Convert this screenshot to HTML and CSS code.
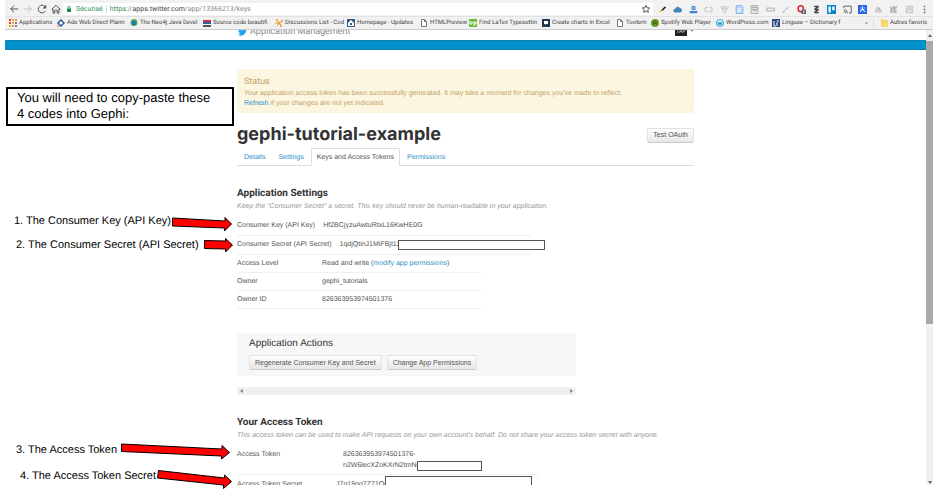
FILE: index.html
```html
<!DOCTYPE html>
<html lang="en">
<head>
<meta charset="utf-8">
<title>Application Management</title>
<link rel="stylesheet" href="styles.css">
</head>
<body>
<div class="browser">
  <div class="toolbar">
    <nav class="history" aria-label="History">
      <button class="tool" aria-label="Back"><svg viewBox="0 0 12 12"><path class="ink" d="M11 6H2M6 2 2 6l4 4"/></svg></button>
      <button class="tool" aria-label="Forward"><svg viewBox="0 0 12 12"><path class="ink faint" d="M1 6h9M6 2l4 4-4 4"/></svg></button>
      <button class="tool" aria-label="Reload"><svg viewBox="0 0 12 12"><path class="ink" d="M10 8.500A4.600 4.600 0 1 1 9.500 3"/><path d="M11 1v4.500H6.500z" fill="#555"/></svg></button>
      <button class="tool" aria-label="Home"><svg viewBox="0 0 12 12"><path class="ink" d="M1 6.500 6 1.500l5 5H9.500V11h-2V7.500h-3V11h-2V6.500z"/></svg></button>
    </nav>
    <div class="address">
      <svg class="lock" viewBox="0 0 8 8"><path d="M1.500 3.500h5V8h-5z" fill="#0b8043"/><path d="M2.500 4V2a1.500 1.500 0 0 1 3 0v2" fill="none" stroke="#0b8043"/></svg>
      <span class="secure">Sécurisé</span>
      <span class="url"><span class="secure">https</span>://<b>apps.twitter.com</b>/app/13366213/keys</span>
      <button class="tool star" aria-label="Bookmark"><svg viewBox="0 0 12 12"><path class="ink" d="m6 1.500 1.300 3 3.200.3-2.400 2.100.7 3.200L6 8.400l-2.800 1.700.7-3.200-2.400-2.100 3.200-.3z"/></svg></button>
    </div>
    <div class="extensions">
      <svg viewBox="0 0 12 12"><path d="m4 7 5-5 2 1-5 5z" fill="#222"/><path d="m1 10 3-4 2 2z" fill="#f4b400"/></svg>
      <svg viewBox="0 0 12 12"><path d="M3 10a2.500 2.500 0 0 1 0-5 3.300 3.300 0 0 1 6-1 3 3 0 0 1 0 6z" fill="#3d86b5"/></svg>
      <svg viewBox="0 0 12 12"><circle cx="6" cy="4" r="3" fill="#3b82d8"/><path d="M1 8h10v3H1z" fill="#3b82d8"/><path d="M4 4h4" stroke="#fff"/></svg>
      <svg viewBox="0 0 12 12"><path class="soft" d="M5 3H4a3 3 0 0 0 0 6h1M7 3h1a3 3 0 0 1 0 6H7"/></svg>
      <svg viewBox="0 0 12 12"><path class="soft" d="m3 1.500 3 2-3 2-2-2zM9 1.500l-3 2 3 2 2-2zM3 5.500l3 2 3-2M3 8l3 2.500L9 8"/></svg>
      <svg viewBox="0 0 12 12"><path d="M1.500.5h7l2 2v9h-9z" fill="#b9d8f8" stroke="#6aa7e8"/><path d="M3 5h5M3 7h5M3 9h5" stroke="#fff"/></svg>
      <svg viewBox="0 0 12 12"><path d="M1.500.5h9v11h-9z" fill="#e4e4e4" stroke="#999"/><path d="M3 3h6M3 6h3l1 2 2-3" fill="none" stroke="#777"/></svg>
      <svg viewBox="0 0 12 12"><path d="M.5 4h11v4H.5z" fill="#ddd" stroke="#aaa"/><path d="M3 6h6" stroke="#fff"/></svg>
      <svg viewBox="0 0 12 12"><path class="soft" d="m2 10 6-6M7 3l2 2 2-3M2 10l3-1"/></svg>
      <svg viewBox="0 0 12 12"><ellipse cx="5" cy="5" rx="3.500" ry="4" fill="none" stroke="#dc2430" stroke-width="2"/><path d="M6 6h6v6H6z" fill="#666"/><path d="M9 7v4" stroke="#fff"/></svg>
      <svg viewBox="0 0 12 12"><path d="M3 1h6v2L6 5h3v2L6 9h3v2H3V9l3-2H3V5l3-2H3z" fill="#444"/></svg>
      <svg viewBox="0 0 12 12"><path d="M0 0h12v12H0z" fill="#0784c5"/><path d="M2 2h3v8H2zM7 2h3v5H7z" fill="#fff"/></svg>
      <svg viewBox="0 0 12 12"><path class="ink" d="M1 4V1.500h10v9H8M1 6a5 5 0 0 1 5 5M1 8.500A2.500 2.500 0 0 1 3.500 11"/></svg>
      <svg viewBox="0 0 12 12"><path d="M0 0h12v12H0z" fill="#2468e8"/><path d="M6 2v3M3 9l3-4 3 4M3 4h1M8 4h1" stroke="#fff" stroke-width="1.500" fill="none"/></svg>
      <svg viewBox="0 0 12 12"><path d="m4 2 3 1 4 6-3 1H2L1 8z" fill="#bbb"/><path d="m5 3-2 5h6" stroke="#eee" fill="none"/></svg>
      <svg viewBox="0 0 12 12"><path d="M2 2h8v9H2z" fill="#ccc"/><path d="m1 3 3 3-2 4M6 1l1 4 4-3M6 7l4 3" stroke="#888" fill="none"/></svg>
      <svg viewBox="0 0 12 12"><path d="M1 1h10v10H1z" fill="#ccc"/><path d="M3 3h2v2H3zM7 3h2v2H7zM3 7h6v2H3z" fill="#eee"/></svg>
      <svg viewBox="0 0 12 12"><path d="M5 1h2v2H5zM5 5h2v2H5zM5 9h2v2H5z" fill="#666"/></svg>
    </div>
  </div>
  <nav class="bookmarks" aria-label="Bookmarks">
    <a href="#"><svg viewBox="0 0 8 8"><path d="M0 0h2v2H0zM0 3h2v2H0z" fill="#ea4335"/><path d="M3 0h2v2H3zM3 3h2v2H3zM0 6h2v2H0z" fill="#f5a623"/><path d="M6 0h2v2H6zM3 6h2v2H3z" fill="#e8a33d"/><path d="M6 3h2v2H6zM6 6h2v2H6z" fill="#8a6fc0"/></svg><span>Applications</span></a>
    <a href="#"><svg viewBox="0 0 8 8"><path d="m4 0 4 4-4 4-4-4z" fill="#27599b"/><path d="m4 2 2 2-2 2-2-2z" fill="#fff"/><path d="m0 5 3 3H1z" fill="#e9862e"/></svg><span>Ade Web Direct Plann</span></a>
    <a href="#"><svg viewBox="0 0 8 8"><circle cx="4" cy="3.500" r="3.500" fill="#54b948"/><circle cx="4" cy="4" r="2.500" fill="#2779ae"/></svg><span>The Neo4j Java Devel</span></a>
    <a href="#"><svg viewBox="0 0 8 8"><path d="M0 1h8v2H0z" fill="#c2363d"/><path d="M0 3h8v2H0z" fill="#355fa7"/><path d="M0 6h8v2H0z" fill="#555"/></svg><span>Source code beautifi</span></a>
    <a href="#"><svg viewBox="0 0 8 8"><path d="m4 4-2-3M4 4l3-2M4 4l3 3M4 4 2 7M4 4H0" stroke="#f29b38"/><circle cx="4" cy="4" r="1.500" fill="#f29b38"/><circle cx="2" cy="1" r="1" fill="#f29b38"/><circle cx="7" cy="2" r="1" fill="#f29b38"/><circle cx="6" cy="7" r="1" fill="#f29b38"/></svg><span>Discussions List - Cod</span></a>
    <a href="#"><svg viewBox="0 0 8 8"><path d="M0 0h8v8H0z" fill="#315d83"/><path d="m1 4 3-3 3 3v3H1z" fill="#fff"/><path d="M3 4h2v2H3z" fill="#315d83"/></svg><span>Homepage - Updates</span></a>
    <a href="#"><svg viewBox="0 0 8 8"><path d="M1.500.5h3l2 2v5h-5zM4.500.5v2h2" fill="#fff" stroke="#777"/></svg><span>HTMLPreview</span></a>
    <a href="#"><svg viewBox="0 0 8 8"><path d="M0 0h8v8H0z" fill="#65bc36"/><path d="M1 2v3h2V2M5 7V3h2v2H5" fill="none" stroke="#fff"/></svg><span>Find LaTex Typesettin</span></a>
    <a href="#"><svg viewBox="0 0 8 8"><path d="M0 0h8v8H0z" fill="#24354f"/><path d="M2 2h4v3H4L3 6V5H2z" fill="#fff"/></svg><span>Create charts in Excel</span></a>
    <a href="#"><svg viewBox="0 0 8 8"><path d="M1.500.5h3l2 2v5h-5zM4.500.5v2h2" fill="#fff" stroke="#777"/></svg><span>Tootem</span></a>
    <a href="#"><svg viewBox="0 0 8 8"><circle cx="4" cy="4" r="4" fill="#669c1d"/><path d="M2 3q2-1 4 0M2 5q2-1 4 0" fill="none" stroke="#36570b"/></svg><span>Spotify Web Player</span></a>
    <a href="#"><svg viewBox="0 0 8 8"><circle cx="4" cy="4" r="3.500" fill="#e5f6fc" stroke="#2ba2ce"/><path d="m2 3 1 3 1-3 1 3 1-3" fill="none" stroke="#2ba2ce"/></svg><span>WordPress.com</span></a>
    <a href="#"><svg viewBox="0 0 8 8"><path d="M0 0h8v8H0z" fill="#274b7e"/><path d="M2 2v5h2M5 3v4M5 2h2" fill="none" stroke="#fff"/></svg><span>Linguee – Dictionary f</span></a>
    <button class="more" aria-label="More bookmarks">»</button>
    <a class="others" href="#"><svg viewBox="0 0 8 8"><path d="M1 0h3v1h4v7H1z" fill="#fbd669"/></svg><span>Autres favoris</span></a>
  </nav>

  <div class="viewport">
    <div class="page">
      <header class="masthead">
        <a class="brand" href="#">
          <svg viewBox="0 0 24 20"><path d="M24 2.400a10 10 0 0 1-2.800.8A5 5 0 0 0 23.300.4a10 10 0 0 1-3.100 1.200 4.900 4.900 0 0 0-8.400 4.500A14 14 0 0 1 1.700.9a5 5 0 0 0 1.500 6.600A5 5 0 0 1 1 6.900a5 5 0 0 0 3.900 4.900 5 5 0 0 1-2.200.1 5 5 0 0 0 4.600 3.400A10 10 0 0 1 0 17.400 14 14 0 0 0 21.500 4.900 10 10 0 0 0 24 2.400z" fill="#1da1f2"/></svg>
          <span>Application Management</span>
        </a>
        <button class="account" aria-label="Account"><span class="avatar">TAP</span><svg viewBox="0 0 4 3"><path d="M0 0h4L2 3z" fill="#888"/></svg></button>
      </header>
      <div class="band"></div>

      <main class="content">
        <section class="status">
          <h2>Status</h2>
          <p>Your application access token has been successfully generated. It may take a moment for changes you've made to reflect.</p>
          <p><a href="#">Refresh</a> if your changes are not yet indicated.</p>
        </section>

        <div class="title">
          <h1>gephi-tutorial-example</h1>
          <button class="btn">Test OAuth</button>
        </div>
        <nav class="tabs" aria-label="Application">
          <a href="#">Details</a>
          <a href="#">Settings</a>
          <a class="active" href="#" aria-current="page">Keys and Access Tokens</a>
          <a href="#">Permissions</a>
        </nav>

        <section class="panel">
          <h2>Application Settings</h2>
          <p class="note">Keep the "Consumer Secret" a secret. This key should never be human-readable in your application.</p>
          <table class="details">
            <tr class="wide"><th scope="row">Consumer Key (API Key)</th><td>Hf2BCjyzuAwtuRtxL16KwHE0G</td></tr>
            <tr class="wide"><th scope="row">Consumer Secret (API Secret)</th><td>1qdjQtinJ1MiFBjt12<span class="redaction long"></span></td></tr>
            <tr><th scope="row">Access Level</th><td>Read and write (<a href="#">modify app permissions</a>)</td></tr>
            <tr><th scope="row">Owner</th><td>gephi_tutorials</td></tr>
            <tr><th scope="row">Owner ID</th><td>826363953974501376</td></tr>
          </table>
        </section>

        <section class="actions">
          <h3>Application Actions</h3>
          <div class="buttons">
            <button class="btn">Regenerate Consumer Key and Secret</button>
            <button class="btn">Change App Permissions</button>
          </div>
        </section>
        <div class="hscroll"><svg viewBox="0 0 3 4"><path d="M3 0v4L0 2z" fill="#888"/></svg><svg viewBox="0 0 3 4"><path d="M0 0v4l3-2z" fill="#888"/></svg></div>

        <section class="panel tokens">
          <h2>Your Access Token</h2>
          <p class="note">This access token can be used to make API requests on your own account's behalf. Do not share your access token secret with anyone.</p>
          <table class="details">
            <tr><th scope="row">Access Token</th><td>826363953974501376-<br>n2W6lecXZoKXrN2tmNe<span class="redaction short"></span></td></tr>
            <tr class="secret"><th scope="row">Access Token Secret</th><td>J7q18qq7Z71Qe<span class="redaction long"></span></td></tr>
          </table>
        </section>
      </main>
    </div>
    <div class="vscroll">
      <svg viewBox="0 0 4 3"><path d="M0 3h4L2 0z" fill="#666"/></svg>
      <div class="track"><div class="thumb"></div></div>
      <svg viewBox="0 0 4 3"><path d="M0 0h4L2 3z" fill="#666"/></svg>
    </div>
  </div>
</div>

<aside class="notes">
  <p class="callout">You will need to copy-paste these 4 codes into Gephi:</p>
  <p class="label key">1. The Consumer Key (API Key)</p>
  <p class="label key-secret">2. The Consumer Secret (API Secret)</p>
  <p class="label token">3. The Access Token</p>
  <p class="label token-secret">4. The Access Token Secret</p>
  <svg class="arrows" viewBox="0 0 240 491">
    <path d="M172.500 218 225 221v-3.500l6.500 6.500-7 7v-3l-52-2z"/>
    <path d="M204.500 240.500 225.500 241v-2.500l7 6.500-7 7v-3l-21-.5z"/>
    <path d="M121.500 444 222 449v-3.500l7.500 7-8 6.500v-3l-100-4.500z"/>
    <path d="m158.500 470.500 66 7.500v-3l7 6.500-8 7v-3.500l-66-7z"/>
  </svg>
</aside>
</body>
</html>
```
FILE: styles.css
```css
* { box-sizing: border-box; }
body { margin: 0; background: #fff; color: #555; font: 7px/10px "Liberation Sans", sans-serif; text-rendering: geometricPrecision; }
h1, h2, h3, p { margin: 0; }
a { color: #2f8fc9; text-decoration: none; }
button { border: 0; padding: 0; background: none; color: inherit; font: inherit; }
svg { display: block; flex: none; }

.browser { display: flex; flex-direction: column; height: 100vh; padding: 0 7px 6px 5px; }

/* Browser chrome */
.toolbar { display: flex; align-items: center; height: 16px; padding: 2px 4px 0; background: #f2f2f2; }
.history { display: flex; gap: 4px; width: 54px; }
.tool { width: 10px; height: 10px; }
.tool svg { width: 10px; height: 10px; }
.ink { fill: none; stroke: #555; stroke-width: 1.2; }
.faint { stroke: #c4c4c4; }
.soft { fill: none; stroke: #bbb; stroke-width: 1.3; }
.address { display: flex; flex: 1; align-items: center; height: 12px; padding: 0 2px 0 3px; background: #fff; font: 7px/12px Roboto, sans-serif; color: #888; }
.address b { font-weight: 400; color: #444; }
.lock { width: 6px; height: 6px; margin-right: 4px; }
.secure { color: #2c9160; }
.url { margin-left: 3px; padding-left: 3px; border-left: 1px solid #ddd; line-height: 8px; }
.star { margin-left: auto; }
.extensions { display: flex; justify-content: space-between; width: 276px; padding-left: 5px; }
.extensions svg { width: 9px; height: 9px; }

.bookmarks { display: grid; grid-template-columns: 48px 73px 73px 72px 72px 73px 49px 73px 74px 35px 65px 56px 76px 1fr auto; align-items: center; height: 14px; padding: 0 4px; background: #f1f1f1; border-top: 1px solid #e2e2e2; border-bottom: 1px solid #ccc; font: 6px/10px Roboto, sans-serif; }
.bookmarks a { display: flex; align-items: center; gap: 2px; color: #444; white-space: nowrap; }
.bookmarks svg { width: 8px; height: 8px; }
.more { padding-right: 5px; text-align: right; }
.bookmarks .others { gap: 2px; padding: 0 2px 0 6px; border-left: 1px solid #ddd; }

/* Scrolled page */
.viewport { display: flex; flex: 1; min-height: 0; }
.page { flex: 1; overflow: hidden; }
.masthead { display: flex; align-items: flex-end; justify-content: space-between; max-width: 457px; height: 10px; margin: 0 auto; overflow: hidden; }
.brand { display: flex; align-items: center; gap: 3px; height: 16px; padding: 0 0 0 1px; color: #8a8a8a; font: 9px/14px Roboto, sans-serif; }
.brand svg { width: 9px; height: 8px; }
.account { display: flex; align-items: center; gap: 3px; height: 14px; padding-bottom: 5px; }
.account svg { width: 4px; height: 3px; }
.avatar { width: 12px; height: 10px; background: #222; color: #ddd; font-size: 5px; }
.band { height: 10px; background: #0090ca; border-top: 1px solid #1580b0; border-bottom: 1px solid #1580b0; }
.content { max-width: 457px; margin: 0 auto; padding-top: 19px; }

.status { padding: 7px 7px 4px; border-radius: 2px; background: #fcf6e1; color: #c4a067; }
.status h2 { font: 9px/13px Roboto, sans-serif; }

.title { display: flex; align-items: center; justify-content: space-between; height: 24px; margin-top: 10px; }
h1 { color: #333; font: 700 18px/24px Inter, sans-serif; }
.btn { height: 15px; padding: 0 5px; border: 1px solid #e2e2e2; border-bottom-color: #ccc; border-radius: 2px; background: linear-gradient(#fff, #e6e6e6); color: #555; }

.tabs { display: flex; gap: 1px; height: 18px; margin-top: 1px; padding-left: 1px; border-bottom: 1px solid #ddd; line-height: 17px; }
.tabs a { height: 18px; padding: 0 5px; border: 1px solid transparent; }
.tabs .active { border-color: #ddd; border-bottom-color: #fff; border-radius: 2px 2px 0 0; background: #fff; color: #555; }

.panel { margin-top: 22px; }
.panel h2 { color: #333; font: 700 10px/12px Roboto, sans-serif; }
.note { margin-top: 2px; color: #999; font-style: italic; white-space: nowrap; }
.details { display: block; margin-top: 5px; }
.details tbody { display: block; }
.details tr { display: flex; align-items: center; width: 244px; height: 18px; border-bottom: 1px solid #f0f0f0; }
.details .wide { width: 294px; height: 19px; }
.details th { flex: none; min-width: 85px; padding: 0 8px 0 0; font-weight: 400; text-align: left; white-space: nowrap; }
.details td { position: relative; padding: 0; white-space: nowrap; }
.redaction { position: absolute; bottom: 0; left: 100%; height: 10px; margin-left: -3px; border: 1px solid #555; background: #fff; }
.redaction.long { width: 147px; }
.redaction.short { width: 65px; }

.actions { width: 339px; margin-top: 24px; padding: 4px 12px 6px; border-radius: 2px; background: #f7f7f7; }
.actions h3 { color: #333; font: 10px/14px "Liberation Sans", sans-serif; }
.buttons { display: flex; gap: 5px; margin-top: 4px; }
.hscroll { display: flex; align-items: center; justify-content: space-between; width: 339px; height: 8px; margin-top: 11px; padding: 0 3px; background: #f0f0f0; }
.hscroll svg { width: 3px; height: 4px; }

.tokens .details { margin-top: 4px; }
.tokens tr { align-items: flex-start; width: 302px; height: auto; padding: 4px 0 3px; line-height: 11px; }
.tokens th { min-width: 106px; }
.tokens .secret th { min-width: 99px; }
.tokens .secret .redaction { top: -3px; height: 16px; }

.vscroll { display: flex; flex-direction: column; align-items: center; gap: 4px; width: 7px; padding: 4px 0 1px; background: #f0f0f0; }
.vscroll svg { width: 4px; height: 3px; }
.track { flex: 1; width: 100%; }
.thumb { height: 65%; background: #a9a9a9; }

/* Presenter's annotations over the page */
.notes { position: absolute; top: 0; left: 0; width: 240px; color: #000; }
.callout { position: absolute; top: 87px; left: 6px; width: 228px; padding: 1px 16px 2px 9px; border: 2px solid #000; background: #fff; font-size: 13px; line-height: 16px; }
.label { position: absolute; font-size: 11px; line-height: 14px; white-space: nowrap; }
.key { top: 214px; left: 14px; }
.key-secret { top: 238px; left: 16px; }
.token { top: 443px; left: 16px; }
.token-secret { top: 469px; left: 20px; }
.arrows { width: 240px; height: 491px; fill: #f00; stroke: #000; }
```
